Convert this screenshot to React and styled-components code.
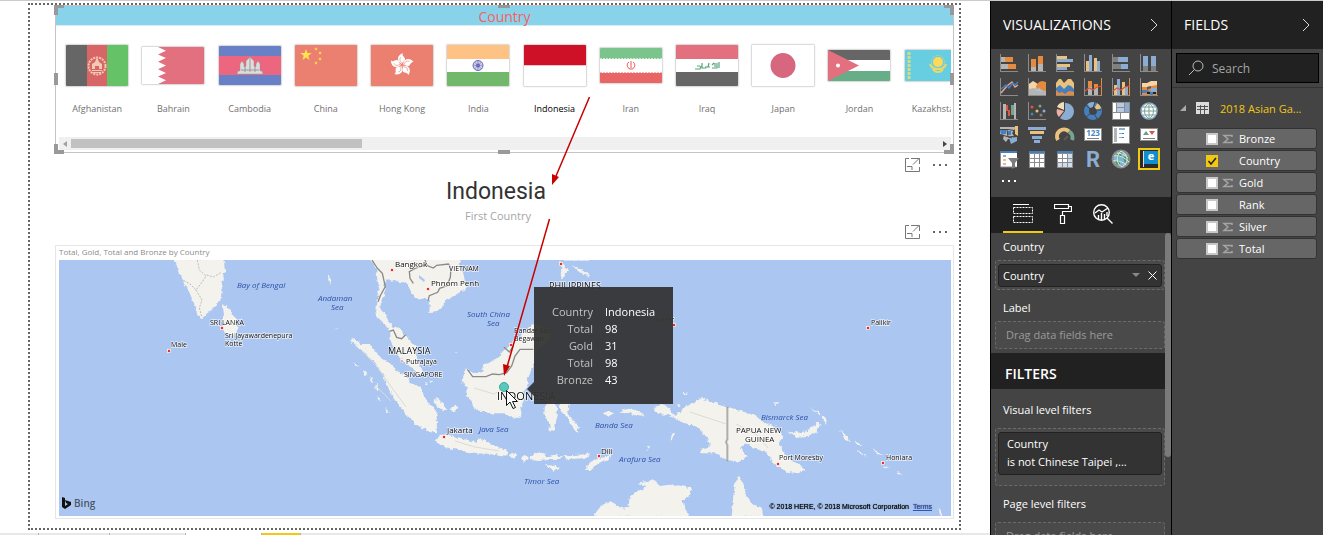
import React from "react";
import styled, { createGlobalStyle, css } from "styled-components";

const Global = createGlobalStyle`
  *, *::before, *::after { box-sizing: border-box; }
  body { margin: 0; background: #fff; overflow: hidden; font-family: "Open Sans", "Noto Sans", sans-serif; font-size: 12px; }
  button, input { font: inherit; color: inherit; margin: 0; }
  button { background: none; border: 0; padding: 0; cursor: pointer; }
  ul, dl, dd, h1, h2, h3, p { margin: 0; padding: 0; list-style: none; font-weight: 400; }
  svg { display: block; }
`;

const Shell = styled.div`
  display: flex;
  height: 100vh;
  border-top: 1px solid #cbcbcb;
`;

/* ---------- report canvas ---------- */
const Report = styled.main`
  flex: 1;
  min-width: 0;
  display: flex;
  flex-direction: column;
`;
const Canvas = styled.section`
  position: relative;
  flex: 1;
  min-height: 0;
  margin: 2px 29px 3px 28px;
  padding: 0 5px 0 25px;
  border: 2px dotted #666;
`;
const PageTabs = styled.nav`
  display: flex;
  height: 2px;
  background: #e8e8e8;
  overflow: hidden;
`;
const PageTab = styled.span`
  width: ${(p) => p.$w}px;
  border-right: 1px solid #b5b5b5;
  background: ${(p) => p.$bg || "#e8e8e8"};
`;

const Slicer = styled.section`
  position: relative;
  border: 1px solid #c4c4c4;
`;
const SlicerTitle = styled.h2`
  height: 20px;
  line-height: 21px;
  text-align: center;
  font-size: 14px;
  color: #f7605f;
  background: #88d3ea;
  border-bottom: 1px solid #d3eef7;
`;
const SlicerBody = styled.div`
  padding: 0 2px 2px 3px;
`;
const FlagList = styled.ul`
  display: grid;
  grid-auto-flow: column;
  grid-auto-columns: calc(100% / 11.7);
  height: 111px;
  overflow: hidden;
`;
const FlagButton = styled.button`
  width: 100%;
  padding-top: 1px;
  display: flex;
  flex-direction: column;
  align-items: center;
  font-size: 9px;
  line-height: 12px;
  color: ${(p) => (p.$on ? "#000" : "#707070")};
`;
const FlagSlot = styled.span`
  height: 76px;
  display: flex;
  align-items: center;
  svg { border: 1px solid #dcdcdc; border-radius: 2px; box-shadow: 0 0 1px #bbb; }
`;
const Scrollbar = styled.div`
  height: 13px;
  display: flex;
  align-items: center;
  justify-content: space-between;
  background: #f0f0f0;
  padding: 0 4px 0 3px;
`;
const Thumb = styled.span`
  width: 291px;
  height: 9px;
  margin: 0 auto 0 4px;
  background: #c1c1c1;
`;
const Handle = styled.i`
  position: absolute;
  ${(p) =>
    p.$corner
      ? css`width: 10px; height: 10px; border: 0 solid #999;`
      : css`background: #999;`}
  ${(p) => p.$at}
`;

const Tools = styled.div`
  height: 16px;
  margin-top: ${(p) => p.$top}px;
  padding-right: 6px;
  display: flex;
  justify-content: flex-end;
  align-items: center;
  gap: 13px;
  button { height: 16px; }
`;
const Card = styled.section`
  padding: 5px 17px 0 0;
  text-align: center;
`;
const CardValue = styled.p`
  font-family: Roboto, sans-serif;
  font-size: 23px;
  line-height: 28px;
  color: #333;
`;
const CardLabel = styled.p`
  margin-top: 3px;
  padding-left: 4px;
  font-size: 11px;
  line-height: 14px;
  color: #a6a6a6;
`;

const MapVisual = styled.section`
  margin-top: 5px;
  padding: 0 2px 2px 3px;
  border: 1px solid #e6e6e6;
`;
const MapTitle = styled.h2`
  height: 14px;
  font-size: 8px;
  line-height: 11px;
  color: #8c8c8c;
`;
const MapBox = styled.div`
  position: relative;
  > svg { width: 100%; height: 256px; }
`;
const Tooltip = styled.dl`
  position: absolute;
  left: 475px;
  top: 27px;
  width: 139px;
  height: 117px;
  padding: 16px 0 0 10px;
  display: grid;
  grid-template-columns: 49px 1fr;
  column-gap: 12px;
  grid-auto-rows: 17px;
  line-height: 17px;
  font-size: 11px;
  color: #fff;
  background: rgba(52, 52, 52, 0.95);
  &::before {
    content: "";
    position: absolute;
    left: -7px;
    top: 95px;
    border: 7px solid transparent;
    border-left: 0;
    border-right-color: rgba(52, 52, 52, 0.95);
  }
  dt { text-align: right; color: #c2c2c2; }
`;
const Annotations = styled.svg`
  position: absolute;
  left: 0;
  top: 0;
  pointer-events: none;
`;
const MapCredit = styled.p`
  position: absolute;
  right: 19px;
  bottom: 3px;
  font: 400 7px/12px "Liberation Sans", sans-serif;
  color: #000;
  text-shadow: 0 0 1px #222;
  a { color: #3355bb; margin-left: 2px; }
`;
const Bing = styled.p`
  position: absolute;
  left: 3px;
  bottom: 6px;
  display: flex;
  align-items: center;
  gap: 3px;
  font-size: 10px;
  font-weight: 600;
  line-height: 14px;
  color: #4b5666;
`;

/* ---------- side panes ---------- */
const Pane = styled.aside`
  width: ${(p) => p.$w}px;
  flex: none;
  display: flex;
  flex-direction: column;
  overflow: hidden;
  background: #444;
  color: #fff;
  border: 0 solid #000;
  border-width: ${(p) => p.$edges};
`;
const PaneHead = styled.header`
  flex: none;
  height: 48px;
  display: flex;
  align-items: center;
  justify-content: space-between;
  padding: 0 13px 0 12px;
  background: #212121;
  h2 { font-size: 14px; font-weight: 500; line-height: 20px; }
`;
const VizGrid = styled.div`
  display: grid;
  grid-template-columns: repeat(6, 28px);
  grid-auto-rows: 24px;
  padding: 5px 0 0 9px;
  align-items: start;
`;
const VizButton = styled.button`
  width: 18px;
  height: 18px;
  outline: ${(p) => (p.$on ? "2px solid #f2c811" : "none")};
`;
const MoreButton = styled.button`
  align-self: flex-start;
  height: 14px;
  margin: 0 0 9px 11px;
`;
const TabRow = styled.div`
  flex: none;
  display: flex;
  padding-left: 12px;
  height: 36px;
  background: #212121;
`;
const TabButton = styled.button`
  width: 40px;
  display: flex;
  align-items: center;
  justify-content: center;
  border-bottom: 2px solid ${(p) => (p.$on ? "#f2c811" : "transparent")};
`;
const Scroller = styled.div`
  flex: 1;
  display: flex;
  min-height: 0;
`;
const Wells = styled.div`
  flex: 1;
  min-width: 0;
`;
const PaneThumb = styled.div`
  width: 6px;
  height: 224px;
  border-radius: 3px;
  background: #7a7a7a;
`;
const WellLabel = styled.h3`
  padding: ${(p) => p.$top}px 0 ${(p) => p.$bottom || 3}px 12px;
  font-size: 11px;
  line-height: 20px;
`;
const DropZone = styled.div`
  margin-left: 4px;
  min-height: 28px;
  padding: ${(p) => (p.$filled ? "3px 2px" : "0 10px")};
  padding-bottom: ${(p) => p.$bottom || 0}px;
  border: 1px dashed #6a6a6a;
  border-radius: 3px;
  background: #4a4a4a;
  color: #9a9a9a;
  font-size: 11px;
  line-height: 26px;
`;
const Pill = styled.div`
  display: flex;
  align-items: center;
  height: 23px;
  padding: 0 4px;
  border: 1px solid #222;
  border-radius: 3px;
  background: #333;
  color: #fff;
  font-size: 11px;
  span { flex: 1; }
  button + button { margin-left: 8px; }
`;
const FilterCard = styled.div`
  padding: 2px 8px 3px;
  border: 1px solid #222;
  border-radius: 3px;
  background: #333;
  color: #fff;
  font-size: 11px;
  line-height: 18px;
`;
const FiltersHead = styled.h2`
  height: 36px;
  margin-top: 4px;
  padding-left: 14px;
  font-size: 14px;
  font-weight: 600;
  line-height: 42px;
  background: #212121;
`;
const SearchBox = styled.label`
  display: flex;
  align-items: center;
  gap: 8px;
  height: 30px;
  margin: 4px 4px 4px 4px;
  padding-left: 11px;
  border: 1px solid #000;
  background: #212121;
  input {
    flex: 1;
    min-width: 0;
    border: 0;
    padding: 0;
    outline: 0;
    background: none;
    font-size: 12px;
  }
  input::placeholder { color: #a5a5a5; opacity: 1; }
`;
const TableRow = styled.div`
  display: flex;
  align-items: center;
  height: 41px;
  padding-left: 8px;
  border-top: 1px solid #333;
  color: #f2c811;
  font-size: 11px;
  svg + svg { margin: 0 11px 0 10px; }
`;
const FieldList = styled.ul`
  display: grid;
  gap: 1px;
  padding: 0 6px 0 4px;
`;
const FieldRow = styled.label`
  display: flex;
  align-items: center;
  height: 21px;
  padding-left: 29px;
  border: 1px solid #333;
  border-radius: 3px;
  background: #666;
  font-size: 11px;
  svg { width: 21px; flex: none; }
`;
const Check = styled.input`
  appearance: none;
  width: 12px;
  height: 12px;
  border: 2px solid #c8c8c8;
  background: #fff;
  &:checked {
    border: 0;
    background: #f2c811;
  }
`;
const CheckWrap = styled.span`
  display: grid;
  > * { grid-area: 1 / 1; }
  > svg { width: 12px; z-index: 1; pointer-events: none; }
`;

/* ---------- flags ---------- */
const star = (cx, cy, r) =>
  Array.from({ length: 10 }, (_, i) => {
    const a = (Math.PI / 5) * i - Math.PI / 2;
    const k = i % 2 ? r * 0.4 : r;
    return `${(cx + k * Math.cos(a)).toFixed(1)},${(cy + k * Math.sin(a)).toFixed(1)}`;
  }).join(" ");

const COUNTRIES = [
  { name: "Afghanistan", h: 41, art: (
    <>
      <path fill="#666" d="M0 0h21v41H0z" /><path fill="#d96666" d="M21 0h20v41H21z" /><path fill="#66c266" d="M41 0h21v41H41z" />
      <circle cx="31" cy="21" r="8.5" fill="none" stroke="#f2c9b4" strokeWidth="2" strokeDasharray="2 1" />
      <path fill="#f2c9b4" d="M26 24v-5l3-2 2-5 2 5 3 2v5h-3v-3h-4v3zM26 25h10v1H26zM27 27h8v1h-8z" />
    </>) },
  { name: "Bahrain", h: 37, art: (
    <>
      <path fill="#fff" d="M0 0h62v37H0z" />
      <path fill="#e3707e" d="M62 0H16l8 3.7-8 3.7 8 3.7-8 3.7 8 3.7-8 3.7 8 3.7-8 3.7 8 3.7-8 3.7h46z" />
    </>) },
  { name: "Cambodia", h: 39, art: (
    <>
      <path fill="#6780c6" d="M0 0h62v39H0z" /><path fill="#ec667f" d="M0 10h62v19H0z" />
      <path fill="#ddd" stroke="#999" strokeWidth=".5" d="M18 28l1-3h2v-7l2-3 2 3v3l2-1v-5l4-4 4 4v5l2 1v-3l2-3 2 3v7h2l1 3z" />
      <path stroke="#999" d="M22 24h18M31 12v14M26 20v6M36 20v6" />
    </>) },
  { name: "China", h: 41, art: (
    <>
      <path fill="#eb8070" d="M0 0h62v41H0z" />
      <g fill="#ffe34f"><polygon points={star(11, 10, 6)} /><polygon points={star(21, 4, 2)} /><polygon points={star(25, 8, 2)} /><polygon points={star(25, 14, 2)} /><polygon points={star(21, 18, 2)} /></g>
    </>) },
  { name: "Hong Kong", h: 41, art: (
    <>
      <path fill="#eb8070" d="M0 0h62v41H0z" />
      {[0, 72, 144, 216, 288].map((a) => (
        <g key={a} transform={`rotate(${a} 31 20)`}>
          <path fill="#fff" d="M31 19c-6-3-5-9 1-11-2 3 3 4 2 7-1 2-3 2-3 4z" />
          <path stroke="#eb8070" strokeWidth=".6" fill="none" d="M31 18c-2-2-3-4-1-6" />
        </g>
      ))}
    </>) },
  { name: "India", h: 41, art: (
    <>
      <path fill="#ffc285" d="M0 0h62v14H0z" /><path fill="#fff" d="M0 14h62v13H0z" /><path fill="#71b86b" d="M0 27h62v14H0z" />
      <circle cx="31" cy="20.500" r="5" fill="#c9c9ea" stroke="#6a6ab8" /><circle cx="31" cy="20.500" r="2" fill="#5a5ab0" />
      <path stroke="#7a7ac0" strokeWidth=".5" d="M26 20.500h10M31 16v9M27.500 17l7 7M34.500 17l-7 7" />
    </>) },
  { name: "Indonesia", h: 41, on: true, art: (<><path fill="#ce1126" d="M0 0h62v20.500H0z" /><path fill="#fff" d="M0 20.500h62V41H0z" /></>) },
  { name: "Iran", h: 35, art: (
    <>
      <path fill="#7bc48b" d="M0 0h62v12H0z" /><path fill="#fff" d="M0 11h62v14H0z" /><path fill="#e86666" d="M0 25h62v10H0z" />
      <path stroke="#c9e8ce" strokeDasharray="2 1" d="M0 10.500h62" /><path stroke="#f5b5b5" strokeDasharray="2 1" d="M0 24.500h62" />
      <path stroke="#e55" fill="none" d="M29 14c-3 2-2 6 1 7M33 14c3 2 2 6-1 7M31 13v9" />
    </>) },
  { name: "Iraq", h: 41, art: (
    <>
      <path fill="#e3707e" d="M0 0h62v14H0z" /><path fill="#fff" d="M0 14h62v13H0z" /><path fill="#666" d="M0 27h62v14H0z" />
      <path stroke="#58a57c" strokeWidth="1.200" fill="none" d="M19 24h5l1-3M26 18v5h4v-2M31 22h3M33 18l-1 4M36 23h5v-5M39 18v4M43 17v6M21 21h3M36 20l2-2" />
    </>) },
  { name: "Japan", h: 41, art: (<><path fill="#fff" d="M0 0h62v41H0z" /><circle cx="31" cy="20.500" r="12.500" fill="#d7667f" /></>) },
  { name: "Jordan", h: 31, art: (
    <>
      <path fill="#666" d="M0 0h62v10H0z" /><path fill="#fff" d="M0 10h62v11H0z" /><path fill="#66ad88" d="M0 21h62v10H0z" />
      <path fill="#e3707e" d="M0 0l31 15.500L0 31z" /><circle cx="10" cy="15.500" r="2" fill="#fff" />
    </>) },
  { name: "Kazakhstan", h: 31, art: (
    <>
      <path fill="#66cee0" d="M0 0h62v31H0z" /><path stroke="#d5dc85" strokeWidth="3" strokeDasharray="3 1" d="M4 2v27" />
      <circle cx="33" cy="12" r="5" fill="#ffd95a" /><circle cx="33" cy="12" r="6.500" fill="none" stroke="#e5d870" strokeDasharray="1 1" />
      <path stroke="#e5d870" strokeWidth="2" fill="none" d="M25 14c1 4 4 5 8 5s7-1 8-5M28 19c2 4 8 4 10 0" />
    </>) },
];

/* ---------- visualization icons ---------- */
const O = "#e68a3d", T = "#eac27d", B = "#8badd3", D = "#4480bd", G = "#b5b5b5", K = "#808080", R = "#d9593f";
const Box = ({ f, d }) => <path fill={f} d={d} />;
const Axis = ({ right }) => (
  <>
    <path fill="#8c8c8c" d="M0 0h1v18H0zM0 17h18v1H0z" />
    {right && <path fill={O} d="M17 0h1v18h-1z" />}
  </>
);
const VIZ = [
  ["Stacked bar chart", <><Axis /><Box f={G} d="M1 3h4v5H1zM1 10h7v5H1z" /><Box f={O} d="M5 3h8v5H5zM8 10h8v5H8z" /></>],
  ["Stacked column chart", <><Axis /><Box f={O} d="M3 5h5v8H3zM10 2h5v8h-5z" /><Box f={G} d="M3 13h5v4H3zM10 10h5v7h-5z" /></>],
  ["Clustered bar chart", <><Axis /><Box f={T} d="M1 2h10v3H1zM1 10h13v3H1z" /><Box f={B} d="M1 5h16v3H1zM1 13h10v3H1z" /></>],
  ["Clustered column chart", <><Axis /><Box f={T} d="M2 7h3v10H2zM10 4h3v13h-3z" /><Box f={B} d="M5 1h3v16H5zM13 7h3v10h-3z" /></>],
  ["100% stacked bar chart", <><Axis /><Box f={K} d="M1 3h5v5H1zM1 10h8v5H1z" /><Box f={B} d="M6 3h10v5H6zM9 10h7v5H9z" /></>],
  ["100% stacked column chart", <><Axis /><Box f={B} d="M3 2h5v10H3zM11 2h5v10h-5z" /><Box f={K} d="M3 12h5v5H3zM11 12h5v5h-5z" /></>],
  ["Line chart", <><Axis /><path fill="none" stroke="#e6a595" strokeWidth="1.500" d="M1 15l6-7 5-4 3 5 3-2" /><path fill="none" stroke={D} strokeWidth="1.500" d="M1 11l5-4 3 3 4-5 2 2 3-3" /></>],
  ["Area chart", <><Axis /><Box f="#f5d5a8" d="M1 17V6l4-3 5 3 3 4 4 7z" /><Box f={O} d="M8 8l3-4 3-1 4 1v13H9z" /><Box f={G} d="M1 11l5-1 6 2 6 1v4H1z" /><Box f="#a9c4df" d="M7 12l4-2 4 3-3 1z" /></>],
  ["Stacked area chart", <><Box f={T} d="M0 5l3-4h2l3 4 4-4h3l3 4v7H0z" /><Box f={D} d="M0 10l4-3 4 4 4-4 3 1 3 3v5H0z" /><Box f={O} d="M0 12l3 3 3-1 3 2 4-3 5 1v4H0z" /><path fill="none" stroke="#8c8c8c" d="M0 17.500h18" /></>],
  ["Line and stacked column chart", <><Axis right /><Box f={O} d="M4 3h4v6H4zM10 6h4v4h-4z" /><Box f={G} d="M4 9h4v8H4zM10 10h4v7h-4z" /><path fill="none" stroke={R} strokeWidth="1.200" d="M1 13l4-3 4 2 4-3 5-1" /></>],
  ["Line and clustered column chart", <><Axis right /><Box f={T} d="M2 7h3v10H2zM10 4h3v13h-3z" /><Box f={B} d="M5 1h3v16H5zM13 9h3v8h-3z" /><path fill="none" stroke={R} strokeWidth="1.200" d="M1 13l4-3 4 2 4-3 5-1" /></>],
  ["Ribbon chart", <><Axis /><Box f={O} d="M2 6h5l4-1h6v12H2z" /><Box f="#f5d5a8" d="M2 5h5l4-2h6v4l-6 1-4 1H2z" /><Box f="#5d5d5d" d="M7 9l4-1v2l-4 2z" /><Box f={D} d="M2 12h5l4 2h2v3h-2l-4-2H2z" /><Box f={B} d="M11 10h6v4h-6z" /><Box f="#222" d="M7 14h3v2H7zM13 14h3v2h-3z" /></>],
  ["Waterfall chart", <><Axis /><Box f={G} d="M3 2h3v15H3zM14 1h2v16h-2z" /><Box f={R} d="M6 3h2v6H6zM8 8h2v6H8z" /><Box f="#77a38f" d="M11 3h3v10h-3z" /></>],
  ["Scatter chart", <><Axis /><circle cx="4" cy="5" r="1.500" fill={R} /><circle cx="12" cy="4" r="1.500" fill="#77a38f" /><circle cx="9" cy="9" r="1.500" fill={T} /><circle cx="16" cy="9" r="1.500" fill={B} /><circle cx="4" cy="12" r="1.500" fill={D} /><circle cx="13" cy="13" r="1.500" fill={K} /></>],
  ["Pie chart", <><path fill={B} d="M9 1a8.500 8.500 0 1 1-5 15l5-7z" /><path fill="#eeb0a2" d="M8 9l-5 6a8 8 0 0 1-2-8z" /><path fill="#f5ddb8" d="M8 0v8L1 5a8 8 0 0 1 7-5z" /></>],
  ["Donut chart", <><circle cx="9" cy="9" r="6.500" fill="none" stroke={D} strokeWidth="5" /><path fill="none" stroke={B} strokeWidth="5" d="M5 4a6.500 6.500 0 0 1 5-1.500" /><path fill="none" stroke={T} strokeWidth="5" d="M12 3.500a7 7 0 0 1 3 3.500" /><path stroke="#444" d="M11 0L9 6M17 8h-5M2 3l4 4M2 15l4-3M13 17l-2-4" /></>],
  ["Treemap", <><Box f="#8c8c8c" d="M0 0h18v18H0z" /><Box f="#fff" d="M1 1h3v9H1zM1 11h7v6H1zM9 11h8v6H9z" /><Box f="#b8cbe2" d="M5 1h7v4H5zM5 6h7v4H5z" /><Box f={B} d="M13 1h4v9h-4z" /></>],
  ["Map", <><circle cx="9" cy="9" r="8" fill="#fff" stroke={B} strokeWidth="1.500" /><path fill="none" stroke="#77a38f" d="M9 1v16M1 9h16M3 5h12M3 13h12M9 1C3 5 3 13 9 17M9 1c6 4 6 12 0 16" /></>],
  ["Filled map", <><Box f={G} d="M0 1h15v2l-3 4 2 3-3 3H8l-2 3-3-3 1-4-4-1z" /><Box f={D} d="M0 4h6v4H1zM7 5h4v4H8z" /><Box f={B} d="M9 12l8-1v4l-6 3z" /><Box f={T} d="M15 0h3v10l-3-2z" /><path fill="none" stroke="#444" d="M0 3.500h8l6 1M7 4l1 7 8-1M2 9l10 3" /></>],
  ["Funnel", <><Box f={B} d="M0 1h18v3H0zM4 10h10v3H4zM6 14h6v3H6z" /><Box f={T} d="M2 5h14v3H2z" /></>],
  ["Gauge", <><path fill="none" stroke={T} strokeWidth="4" d="M2 14a7 7 0 0 1 11-8.500" /><path fill="none" stroke="#77a38f" strokeWidth="4" d="M13 5.500a7 7 0 0 1 3 8.500" /><path stroke="#5c5c5c" strokeWidth="2" d="M8 14l4-4" /></>],
  ["Card", <><Box f="#8c8c8c" d="M0 2h18v13H0z" /><Box f="#fff" d="M1 3h16v11H1z" /><text x="9" y="10" fill="#4a86c0" fontSize="8" fontWeight="700" textAnchor="middle">123</text><Box f={K} d="M3 12h12v1H3z" /></>],
  ["Multi-row card", <><Box f="#8c8c8c" d="M0 0h18v18H0z" /><Box f="#fff" d="M1 1h16v16H1z" /><Box f={G} d="M2 2h3v14H2z" /><Box f={B} d="M7 2h6v2H7zM7 7h3v1H7zM7 11h3v1H7z" /><Box f={D} d="M10 7h2v1h-2zM10 11h2v1h-2z" /></>],
  ["KPI", <><Box f="#8c8c8c" d="M0 2h18v13H0z" /><Box f="#fff" d="M1 3h16v11H1z" /><Box f="#6a9f86" d="M3 9l3-4 3 4z" /><Box f={R} d="M9 5h6l-3 4z" /><Box f={K} d="M3 12h12v1H3z" /></>],
  ["Slicer", <><Box f="#fff" d="M0 1h17v16H0z" /><Box f={D} d="M0 1h17v2H0z" /><path fill="none" stroke="#8c8c8c" d="M.5 3v14h16" /><Box f={B} d="M3 5h3v2H3z" /><Box f={T} d="M3 9h3v2H3z" /><Box f="#eeb0a2" d="M3 13h3v2H3z" /><Box f="#7d7d7d" d="M8 8h11l-4 5v4l-3 2v-6z" /></>],
  ["Table", <><Box f="#8c8c8c" d="M1 1h16v17H1z" /><Box f={D} d="M1 1h16v2H1z" /><path fill="#fff" d="M2 4h4v4H2zM7 4h4v4H7zM12 4h4v4h-4zM2 9h4v3H2zM7 9h4v3H7zM12 9h4v3h-4zM2 13h4v4H2zM7 13h4v4H7zM12 13h4v4h-4z" /></>],
  ["Matrix", <><Box f="#8c8c8c" d="M1 1h16v17H1z" /><Box f={D} d="M1 1h16v2H1z" /><path fill="#fff" d="M2 4h4v4H2zM7 4h4v4H7zM2 9h4v3H2zM7 9h4v3H7z" /><path fill="#cfdeed" d="M12 4h4v4h-4zM12 9h4v3h-4zM2 13h4v4H2zM7 13h4v4H7zM12 13h4v4h-4z" /></>],
  ["R script visual", <text x="9" y="17" fill={B} fontSize="22" fontWeight="700" textAnchor="middle" fontFamily="Roboto, sans-serif">R</text>],
  ["ArcGIS map", <><circle cx="9" cy="9" r="8.500" fill="#7fb2d4" stroke="#8c8c8c" strokeWidth="2" /><path fill="#3d9e4e" d="M4 5l4-3 3 1-2 3-4 2zM11 7l5-1 1 4-4 3zM3 11l4-1 1 4-3 1z" /><path fill="none" stroke="#e5e5e5" d="M9 1C2 8 6 15 10 17M9 1c8 4 8 12 1 16M2 6c5-1 10 1 15 6M1 11c5-1 10 1 13 4M5 3c4 0 8 2 11 5" /></>],
  ["Enlighten slicer", <><Box f="#2a2a2a" d="M0 0h18v18H0z" /><Box f="#ddd" d="M3 1h1v16H3z" /><Box f="#0f8fd0" d="M4 1h14v13H4z" /><text x="11" y="10" fill="#fff" fontSize="11" fontWeight="700" textAnchor="middle">e</text></>],
];

/* ---------- map ---------- */
const Mainlands = () => (
  <g fill="#f3f2ec" filter="url(#coast)">
    <g transform="translate(0 240) scale(.33333)">
      <path d="M523 55l17 45 13 30 12 20 15 35 10 30 10 17 8 2 12-12 10-14 15-6 5-12 12-12 3-28 3-10-4-15 8-7-4-18 8-5-3-20-3-20z" />
      <path d="M668 192l12 4 10 19 13 13 10 17 3 17-8 18-13 8-15-6-10-17-3-20 5-20z" />
    </g>
    <g transform="translate(290 240) scale(.33333)">
      <path d="M242 55l16 30 4 35 6 20-6 30v20l-7 25 7 20 23 20 15 17 2 28 10 30 18 25 20 15 25 25 25 15 3-10-18-25-7-25 2-25-15-20-20-20-10-10-10-13-15 0-15-17-13-30-12-10 5-25 10-20-2-25 7-17 15 4 10-2 10 5 20 3 7 7 13 20 10 20 20 0 25 5-2 40 22-5 20-15 2-15 28-15 30-18 8-12-8-40-10-25V55z" />
      <path d="M178 300l17-2 20 14 25 0 22 28 18 22 20 8 25 25 25 10 5 15 20 15 15 5 20 40 30 35 1 65-11-2-25-10-30-18-30-30-25-30-20-35-10-25-15-30-20-30-25-25-25-20z" />
      <path d="M432 600l18-15 25-2 25 12 35 5 20 5 25-8 20 15 25 10 27 8v20l-22-2-30-6-40-2-30-5-35-7-30-6-20-14z" />
      <path d="M530 385l18 13 20 2 7-5 10-23 20-7 20-15 17-20 18-12 10-18 20-10 15-20 30-20 30 15 15 25-10 20-30 20-5 30-7 25-13 25-3 30-12 20 5 25-15 15 5 25-15 10-20-5-20-10-25 0-17 2-18-12-30-2-5-28-17-15 2-20-12-15 2-25z" />
      <path d="M428 480l17-4 15 17 12 13-12 8-20-18zM480 505l14-8 6 12-12 6zM658 645l14-5 10 8-10 8zM692 655l15-8 10 10-12 6zM718 652l20-14 25 2 10 14-30 6zM190 365l14 10-6 4zM215 385l18 18-8 2zM238 408l12 16-8 2zM258 430l10 20-8 0zM262 465l10 22-8-6zM286 502l14 18-10-4zM402 425l12 4-8 6zM418 420l12 4-8 6zM118 100l6 20-6 14-4-16zM140 260l5 10-4 2zM496 335l8 4-6 4z" />
    </g>
    <g transform="translate(530 240) scale(.33333)">
      <path d="M42 520l3-20 10-14 20 0 7 19-4 40-3 25-15 8-2-28-10-20zM85 486h30l3 19-6 15 18 25 18 15-8 18-15-23-13-25-14-10zM218 520l17-7 17 7-17 10zM268 515l32-10 30 10 12 13-22-3-20-7-20 2z" />
      <path d="M370 505l25-13 20 8 15 25 20-7 15-18 50-25 30 10 45 15 40 10 50 20 25 20 30 10 25 30-15 20 25 40 30 20 25 20-20 10-35-5-35-20-15-25-20-15-30-13-25-12-15 15 20 25-22 15-38-5-20-10-10-10h-50l5-15 25-5-10-30-30-30-40-12-20-8-25-15-30-3z" />
      <path d="M188 830l27-35 30-10 30 20 20-5 5-30 30-20 20-12-30-10 50-8 20 18 40-5 55 12-10 25-17 10 4 20 18 30zM605 830l3-40 7-60 13-22 14 37 8 20 15 25 30 15 5 25z" />
      <path d="M165 690l10-18 30-17 40-7-5 7-35 15-25 20zM0 644l45 6 30-6 25 8-20 8-80-2zM100 646l50-2 30-4-10 14-60 4zM48 672l30 3 12 13-20 4zM88 56l12 19 15 15-10 10-5 22-8-15 2-25zM125 75l35 15 20 20-18-6zM422 605l3-25 10-6-5 22zM348 630l12-14 2 8zM455 455l20 8-15 2zM440 490l10 6-4 4z" />
      <path d="M773 575l37 3 30-8 15-20 10-5 10 10-15 20-25 13-35 2zM835 500l30 15 25 25-2 15-13-25-20-18zM930 570l25 20 5 15-15-5zM975 600l23 18-14-4zM978 628l32 20-14-4zM1028 625l32 20-20-4zM1055 675l25 7-18 4zM1098 692l20 12-14-2zM728 488l20-2-6 6zM1225 800l14 28-10-6zM1065 725l14 6z" />
    </g>
  </g>
);
const Borders = () => (
  <g fill="none" stroke="#8a8a8a" strokeWidth="4">
    <g transform="translate(290 240) scale(.33333)">
      <path d="M246 60l16 25 15 15 9 40-14 25-8 20M405 60l5 14-35 11-17 10 2 20 10 15M410 76l20 8 10-8 35-4 8 12-2 28-10 25-22 8-6 12-25 10-4 15M298 274l12-4 10 22 15 4 12-12M532 388l16 22 40 0 20-8 20 2 22-6 15-20 10-30 15-20 40 0M642 322l16 14 12-18" />
    </g>
    <g transform="translate(530 240) scale(.33333)"><path d="M592 500v98l-4 8 4 10v48" /></g>
    <g transform="translate(0 240) scale(.33333)" stroke="#bbb" strokeWidth="3" strokeDasharray="6 4">
      <path d="M592 60l6 30 20 18-10 16-20 26-18-18-22-12M588 150l18 30-8 24 8 28M620 105l20 6 24-14" />
    </g>
  </g>
);
const CITIES = [
  [222, 328], [169, 351], [392, 270], [428, 289], [402, 361, 1], [444, 437], [511, 345], [561, 264], [599, 456], [674, 325], [868, 328], [778, 464], [883, 463],
];
const PLACES = [
  [210, 325, "SRI LANKA", 7], [225, 338, "Sri Jayawardenepura", 7], [225, 346, "Kotte", 7], [171, 347, "Male", 7],
  [395, 267, "Bangkok", 8], [449, 271, "VIETNAM", 7], [431, 286, "Phnom Penh", 8], [388, 354, "MALAYSIA", 9],
  [406, 364, "Putrajaya", 7], [404, 377, "SINGAPORE", 7], [447, 433, "Jakarta", 8], [514, 333, "Bandar Seri", 7], [514, 341, "Begawan", 7],
  [564, 260, "Manila", 8], [549, 289, "PHILIPPINES", 9], [656, 322, "Koror", 7], [497, 400, "INDONESIA", 11], [601, 454, "Dili", 8], [871, 325, "Palikir", 7],
  [736, 433, "PAPUA NEW", 8], [745, 442, "GUINEA", 8], [779, 460, "Port Moresby", 7], [886, 460, "Honiara", 7],
];
const SEAS = [
  [237, 288, "Bay of Bengal"], [318, 301, "Andaman"], [331, 310, "Sea"], [467, 317, "South China"], [487, 326, "Sea"],
  [479, 432, "Java Sea"], [524, 484, "Timor Sea"], [595, 428, "Banda Sea"], [619, 462, "Arafura Sea"], [761, 420, "Bismarck Sea"],
];
const WorldMap = () => (
  <svg viewBox="59 260 892 256" preserveAspectRatio="xMinYMin slice" role="img" aria-label="Map of Southeast Asia">
    <defs>
      <filter id="coast" x="0" y="0" width="1" height="1">
        <feTurbulence type="fractalNoise" baseFrequency=".22" numOctaves="3" seed="4" />
        <feDisplacementMap in="SourceGraphic" scale="5" xChannelSelector="R" yChannelSelector="G" />
      </filter>
    </defs>
    <path fill="#abc7f1" d="M59 260h1400v400H59z" />
    <Mainlands />
    <path fill="#abc7f1" d="M419 275l6 5-1 2-5-4z" />
    <Borders />
    <path fill="none" stroke="#dcdad2" d="M362 351l14 14 14 20 16 22M474 388l20 6 14-8M690 412l24 8 12 4M736 424l20 10 12 14M455 441l20 6 24 4M375 385l16 16" />
    {CITIES.map(([x, y, small]) => (
      <rect key={`${x}-${y}`} x={x - (small ? 1 : 1.5)} y={y - (small ? 1 : 1.5)} width={small ? 2 : 3} height={small ? 2 : 3} fill="#e0322a" stroke="#fff" strokeWidth=".7" />
    ))}
    <g fill="#0c0c0c" stroke="#fff" strokeOpacity=".7" strokeWidth="1.500" paintOrder="stroke">
      {PLACES.map(([x, y, t, s]) => <text key={t} x={x} y={y} fontSize={s}>{t}</text>)}
    </g>
    <g fill="#2c4fa8" fontStyle="italic" fontSize="8">
      {SEAS.map(([x, y, t]) => <text key={`${t}${x}`} x={x} y={y}>{t}</text>)}
    </g>
    <circle cx="504" cy="387" r="4.500" fill="#5ac8bb" stroke="#3aa79b" />
  </svg>
);

const Focus = () => (
  <svg width="15" height="14" fill="none" stroke="#777"><path d="M4 .5H.5v13h14V9M6 .5h8.500V6M8 6.500l6-6M2 8.500h5V12" /></svg>
);
const Dots = ({ color = "#666", w = 15 }) => (
  <svg width={w} height="14" fill={color}><path d="M0 6h2v2H0zM6 6h2v2H6zM12 6h2v2h-2z" /></svg>
);
const Chevron = () => (
  <svg width="8" height="14" fill="none" stroke="#ddd"><path d="M1 1l6 6-6 6" /></svg>
);
const VisualTools = ({ top }) => (
  <Tools $top={top}>
    <button aria-label="Focus mode"><Focus /></button>
    <button aria-label="More options"><Dots /></button>
  </Tools>
);

const HANDLES = [
  ["left:-2px;top:-1px;border-width:3px 0 0 4px;", 1], ["right:-1px;top:-1px;border-width:3px 4px 0 0;", 1],
  ["left:-2px;bottom:-2px;border-width:0 0 4px 4px;", 1], ["right:-1px;bottom:-2px;border-width:0 4px 4px 0;", 1],
  ["left:-2px;top:67px;width:4px;height:12px;"], ["right:-1px;top:67px;width:4px;height:12px;"],
  ["left:calc(50% - 7px);top:-1px;width:12px;height:3px;"], ["left:calc(50% - 7px);bottom:-2px;width:12px;height:4px;"],
];
const FIELDS = [["Bronze", 1], ["Country", 0, 1], ["Gold", 1], ["Rank", 0], ["Silver", 1], ["Total", 1]];
const TIP = [["Country", "Indonesia"], ["Total", "98"], ["Gold", "31"], ["Total", "98"], ["Bronze", "43"]];

export default function App() {
  return (
    <>
      <Global />
      <Shell>
        <Report>
          <Canvas>
            <Slicer>
              <SlicerTitle>Country</SlicerTitle>
              <SlicerBody>
                <FlagList>
                  {COUNTRIES.map((c) => (
                    <li key={c.name}>
                      <FlagButton $on={c.on} aria-pressed={!!c.on}>
                        <FlagSlot><svg width="64" height={c.h + 2} viewBox={`0 0 62 ${c.h}`}>{c.art}</svg></FlagSlot>
                        {c.name}
                      </FlagButton>
                    </li>
                  ))}
                </FlagList>
                <Scrollbar>
                  <svg width="5" height="8" fill="#a0a0a0"><path d="M5 1v6L1 4z" /></svg>
                  <Thumb />
                  <svg width="5" height="8" fill="#444"><path d="M1 1v6l4-3z" /></svg>
                </Scrollbar>
              </SlicerBody>
              {HANDLES.map(([at, corner]) => <Handle key={at} $at={at} $corner={corner} />)}
            </Slicer>
            <VisualTools top={4} />
            <Card>
              <CardValue>Indonesia</CardValue>
              <CardLabel>First Country</CardLabel>
            </Card>
            <VisualTools top={1} />
            <MapVisual>
              <MapTitle>Total, Gold, Total and Bronze by Country</MapTitle>
              <MapBox>
                <WorldMap />
                <Bing>
                  <svg width="9" height="13" fill="#111"><path d="M0 0l3 1v8l3-2-2-1-1-3 6 2v3l-6 4-3-2z" /></svg>
                  Bing
                </Bing>
                <MapCredit>© 2018 HERE, © 2018 Microsoft Corporation <a href="#terms">Terms</a></MapCredit>
                <Tooltip>
                  {TIP.map(([k, v], i) => (
                    <React.Fragment key={i}><dt>{k}</dt><dd>{v}</dd></React.Fragment>
                  ))}
                </Tooltip>
              </MapBox>
            </MapVisual>
            <Annotations width="929" height="523" viewBox="30 5 929 523">
              <g stroke="#c80000" strokeWidth="1.500"><path d="M589.500 97L556 176M549.500 219L507 367" /></g>
              <path fill="#c80000" d="M552 185v-11l7 3zM504 376l-1-12 7 2z" />
              <path fill="#fff" stroke="#111" d="M506.500 390.500v15l3.500-3.500 3 6.500 2.500-1-3-6h5z" />
            </Annotations>
          </Canvas>
          <PageTabs>
            <PageTab $w={39} /><PageTab $w={71} /><PageTab $w={76} /><PageTab $w={76} $bg="#fff" /><PageTab $w={39} $bg="#f2c811" />
          </PageTabs>
        </Report>

        <Pane $w={182} $edges="0 1px">
          <PaneHead><h2>VISUALIZATIONS</h2><button aria-label="Collapse visualizations"><Chevron /></button></PaneHead>
          <VizGrid>
            {VIZ.map(([name, art], i) => (
              <VizButton key={name} aria-label={name} $on={i === VIZ.length - 1}>
                <svg width="18" height="18" overflow="visible">{art}</svg>
              </VizButton>
            ))}
          </VizGrid>
          <MoreButton aria-label="More visuals"><Dots color="#fff" /></MoreButton>
          <TabRow>
            <TabButton $on aria-label="Fields">
              <svg width="20" height="20" fill="none" stroke="#fff"><path d="M0 .5h16" /><path strokeDasharray="2 1" d="M.5 3.500h19v6H.5zM.5 12.500h19v6H.5z" /></svg>
            </TabButton>
            <TabButton aria-label="Format">
              <svg width="18" height="20" fill="none" stroke="#fff" strokeWidth="1.200"><path d="M.5.500h14v4H.5zM15 2.500h2.500v5h-9V11M6.500 11.500h4v8h-4z" /></svg>
            </TabButton>
            <TabButton aria-label="Analytics">
              <svg width="20" height="20" fill="none" stroke="#fff" strokeWidth="1.400"><circle cx="8.500" cy="8.500" r="7.800" /><path d="M14 14l5.500 5.500M2 9l4-3 3 2 6-4M5.500 15v-4M8.500 16V9M11.500 15v-5M14 12V8" /></svg>
            </TabButton>
          </TabRow>
          <Scroller>
            <Wells>
              <WellLabel $top={4}>Country</WellLabel>
              <DropZone $filled $bottom={2}>
                <Pill>
                  <span>Country</span>
                  <button aria-label="Field options"><svg width="8" height="5" fill="#888"><path d="M0 0h8L4 4z" /></svg></button>
                  <button aria-label="Remove field"><svg width="9" height="9" stroke="#fff"><path d="M.5.500l8 8M8.500.500l-8 8" /></svg></button>
                </Pill>
              </DropZone>
              <WellLabel $top={8}>Label</WellLabel>
              <DropZone>Drag data fields here</DropZone>
              <FiltersHead>FILTERS</FiltersHead>
              <WellLabel $top={11} $bottom={8}>Visual level filters</WellLabel>
              <DropZone $filled $bottom={10}>
                <FilterCard><p>Country</p><p>is not Chinese Taipei ,...</p></FilterCard>
              </DropZone>
              <WellLabel $top={8} $bottom={8}>Page level filters</WellLabel>
              <DropZone>Drag data fields here</DropZone>
            </Wells>
            <PaneThumb />
          </Scroller>
        </Pane>

        <Pane $w={151} $edges="0">
          <PaneHead><h2>FIELDS</h2><button aria-label="Collapse fields"><Chevron /></button></PaneHead>
          <SearchBox>
            <svg width="16" height="16" fill="none" stroke="#bbb"><circle cx="10" cy="6" r="5" /><path d="M6.500 9.500L1 15" /></svg>
            <input type="text" placeholder="Search" aria-label="Search fields" />
          </SearchBox>
          <TableRow>
            <svg width="6" height="6" fill="#aaa"><path d="M6 0v6H0z" /></svg>
            <svg width="13" height="12"><path fill="#ddd" d="M0 0h13v12H0z" /><path stroke="#555" d="M1 4.500h11M1 7.500h11M4.500 3v9M8.500 3v9" /></svg>
            2018 Asian Ga...
          </TableRow>
          <FieldList>
            {FIELDS.map(([name, sum, on]) => (
              <li key={name}>
                <FieldRow>
                  <CheckWrap>
                    <Check type="checkbox" defaultChecked={!!on} />
                    {on && <svg width="12" height="12" fill="none" stroke="#222" strokeWidth="1.500"><path d="M2.500 6l2.500 3 5-6" /></svg>}
                  </CheckWrap>
                  <svg width="21" height="10" fill="none" stroke="#a5a5a5" strokeWidth="1.500">{sum ? <path d="M14 3V1.500H6L10 5 6 8.500h8V7" /> : null}</svg>
                  {name}
                </FieldRow>
              </li>
            ))}
          </FieldList>
        </Pane>
      </Shell>
    </>
  );
}
